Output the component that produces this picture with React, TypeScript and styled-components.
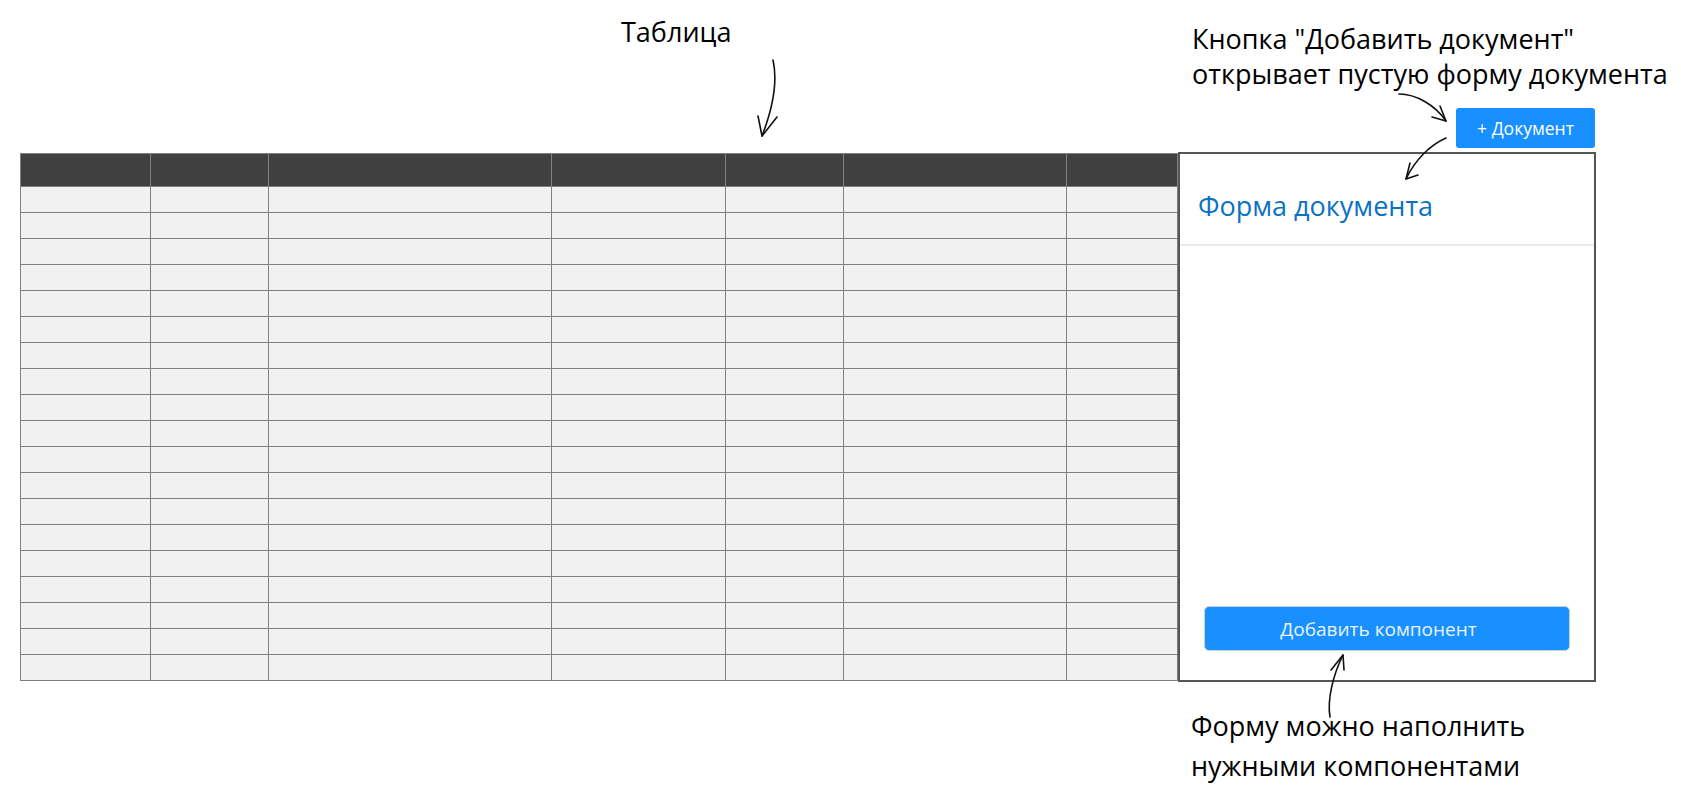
import React from "react";
import styled, { createGlobalStyle } from "styled-components";

const GlobalStyle = createGlobalStyle`
  html, body {
    margin: 0;
    padding: 0;
    background: #ffffff;
  }
  body {
    font-family: "Open Sans", "Noto Sans", sans-serif;
    color: #000;
  }
  * { box-sizing: border-box; }
`;

const Page = styled.div`
  position: relative;
  width: 1681px;
  height: 787px;
  overflow: hidden;
  display: flex;
  align-items: flex-start;
  padding-left: 20px;
`;

const LeftColumn = styled.div`
  display: flex;
  flex-direction: column;
  width: 1158px;
`;

const RightColumn = styled.div`
  display: flex;
  flex-direction: column;
  width: 503px;
`;

const Note = styled.div<{ $top: number; $left: number; $lh: number; $height?: number }>`
  font-family: "Open Sans", "Noto Sans", sans-serif;
  font-size: 27px;
  line-height: ${(p) => p.$lh}px;
  color: #000;
  padding-top: ${(p) => p.$top}px;
  padding-left: ${(p) => p.$left}px;
  ${(p) => (p.$height ? `height: ${p.$height}px;` : "")}
  white-space: nowrap;
`;

const Table = styled.div<{ $cols: string }>`
  display: grid;
  grid-template-columns: ${(p) => p.$cols};
  border-left: 1px solid #808080;
  border-top: 1px solid #808080;
`;

const Cell = styled.div<{ $head?: boolean }>`
  height: ${(p) => (p.$head ? 33 : 26)}px;
  background: ${(p) => (p.$head ? "#404040" : "#f1f1f1")};
  border-right: 1px solid #808080;
  border-bottom: 1px solid #808080;
`;

const DocBar = styled.div`
  width: 418px;
  display: flex;
  justify-content: flex-end;
  padding-right: 1px;
  margin-bottom: 4px;
`;

const PrimaryButton = styled.button`
  height: 40px;
  width: 139px;
  border: none;
  border-radius: 3px;
  background: #1890ff;
  color: #ffffff;
  font-family: "Open Sans", "Noto Sans", sans-serif;
  font-size: 17.5px;
  padding: 0;
  display: flex;
  align-items: center;
  justify-content: center;
  cursor: pointer;
`;

const Panel = styled.div`
  width: 418px;
  height: 530px;
  border: 2px solid #555555;
  background: #fff;
  display: flex;
  flex-direction: column;
`;

const PanelHeader = styled.div`
  height: 92px;
  border-bottom: 2px solid #ebebeb;
  padding: 34px 0 0 18px;
  color: #0a72c4;
  font-family: "Open Sans", "Noto Sans", sans-serif;
  font-size: 27px;
  line-height: 36px;
  white-space: nowrap;
`;

const PanelBody = styled.div`
  flex: 1;
  display: flex;
  flex-direction: column;
  justify-content: flex-end;
  padding: 0 24px 29px 24px;
`;

const WideButton = styled.button`
  height: 45px;
  width: 100%;
  border: 1px solid #c9d3de;
  border-radius: 5px;
  background: #1890ff;
  color: #eaf3ff;
  font-family: "Open Sans", "Noto Sans", sans-serif;
  font-size: 19px;
  padding: 0 17px 0 0;
  cursor: pointer;
`;

const Arrows = styled.svg`
  position: absolute;
  left: 0;
  top: 0;
  pointer-events: none;
`;

const cols = [130, 118, 283, 174, 118, 223, 111];
const rowCount = 19;

export default function App() {
  return (
    <>
      <GlobalStyle />
      <Page>
        <LeftColumn>
          <Note $top={13} $left={601} $lh={37} $height={153}>
            Таблица
          </Note>
          <Table $cols={cols.map((c) => `${c}px`).join(" ")}>
            {cols.map((_, i) => (
              <Cell key={`h${i}`} $head />
            ))}
            {Array.from({ length: rowCount }).flatMap((_, r) =>
              cols.map((_, i) => <Cell key={`r${r}c${i}`} />)
            )}
          </Table>
        </LeftColumn>
        <RightColumn>
          <Note $top={21} $left={14} $lh={35} $height={108}>
            Кнопка "Добавить документ"
            <br />
            открывает пустую форму документа
          </Note>
          <DocBar>
            <PrimaryButton>+ Документ</PrimaryButton>
          </DocBar>
          <Panel>
            <PanelHeader>Форма документа</PanelHeader>
            <PanelBody>
              <WideButton>Добавить компонент</WideButton>
            </PanelBody>
          </Panel>
          <Note $top={24} $left={13} $lh={40}>
            Форму можно наполнить
            <br />
            нужными компонентами
          </Note>
        </RightColumn>
        <Arrows width="1681" height="787" viewBox="0 0 1681 787" fill="none">
          <g stroke="#111" strokeWidth="1.6" strokeLinecap="round" strokeLinejoin="round">
            <path d="M773 60 C 778 82, 772 110, 762 136" />
            <path d="M758 116 L762 136 L777 117" />
            <path d="M1399 94 C 1416 94, 1435 105, 1446 121" />
            <path d="M1440 106 L1446 121 L1432 117" />
            <path d="M1446 138 C 1430 145, 1415 160, 1406 179" />
            <path d="M1410 163 L1406 179 L1418 175" />
            <path d="M1330 717 C 1327 700, 1333 675, 1343 655" />
            <path d="M1331 670 L1343 655 L1344 670" />
          </g>
        </Arrows>
      </Page>
    </>
  );
}
